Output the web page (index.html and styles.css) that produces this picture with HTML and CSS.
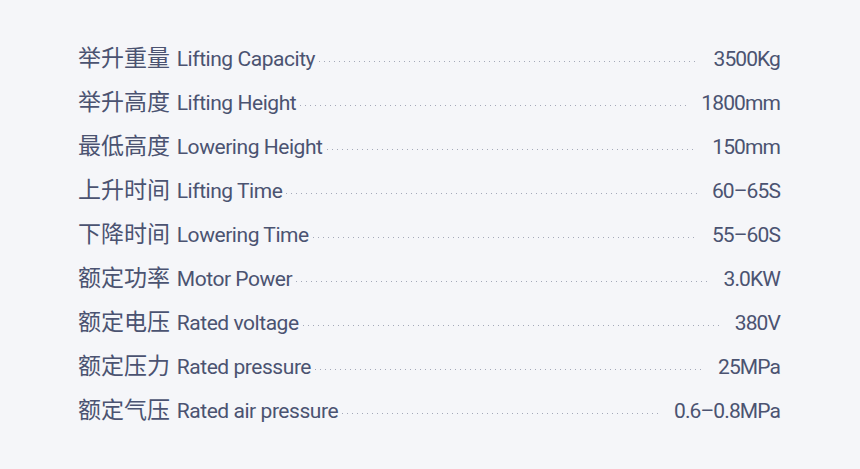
FILE: index.html
```html
<!DOCTYPE html>
<html lang="zh">
<head>
<meta charset="utf-8">
<title>Specs</title>
<link rel="stylesheet" href="styles.css">
</head>
<body>
<div class="specs">
  <div class="row"><span class="label"><span class="zh">举升重量</span> Lifting Capacity</span><span class="leader"></span><span class="value">3500Kg</span></div>
  <div class="row"><span class="label"><span class="zh">举升高度</span> Lifting Height</span><span class="leader"></span><span class="value">1800mm</span></div>
  <div class="row"><span class="label"><span class="zh">最低高度</span> Lowering Height</span><span class="leader"></span><span class="value">150mm</span></div>
  <div class="row"><span class="label"><span class="zh">上升时间</span> Lifting Time</span><span class="leader"></span><span class="value">60–65S</span></div>
  <div class="row"><span class="label"><span class="zh">下降时间</span> Lowering Time</span><span class="leader"></span><span class="value">55–60S</span></div>
  <div class="row"><span class="label"><span class="zh">额定功率</span> Motor Power</span><span class="leader"></span><span class="value">3.0KW</span></div>
  <div class="row"><span class="label"><span class="zh">额定电压</span> Rated voltage</span><span class="leader"></span><span class="value">380V</span></div>
  <div class="row"><span class="label"><span class="zh">额定压力</span> Rated pressure</span><span class="leader"></span><span class="value">25MPa</span></div>
  <div class="row"><span class="label"><span class="zh">额定气压</span> Rated air pressure</span><span class="leader"></span><span class="value">0.6–0.8MPa</span></div>
</div>
</body>
</html>
```
FILE: styles.css
```css
html, body {
  margin: 0;
  padding: 0;
  background: #f5f6f9;
}
body {
  font-family: Roboto, "Noto Sans CJK SC", sans-serif;
  color: #4b5371;
}
.specs {
  padding: 34px 80px 0 78px;
  display: flex;
  flex-direction: column;
}
.row {
  height: 44px;
  display: flex;
  align-items: baseline;
  font-size: 21px;
  line-height: 44px;
}
.label {
  white-space: nowrap;
  letter-spacing: -0.45px;
}
.zh {
  font-family: "Noto Sans CJK SC", sans-serif;
  font-size: 23px;
  letter-spacing: 0;
  margin-right: 2px;
}
.leader {
  flex: 1;
  height: 5px;
  margin: 0 15px 0 4px;
  background-image: linear-gradient(to right, #a4a9b8 1px, transparent 1px);
  background-size: 5px 1px;
  background-position: left top;
  background-repeat: repeat-x;
}
.value {
  white-space: nowrap;
  letter-spacing: -0.9px;
}
```
